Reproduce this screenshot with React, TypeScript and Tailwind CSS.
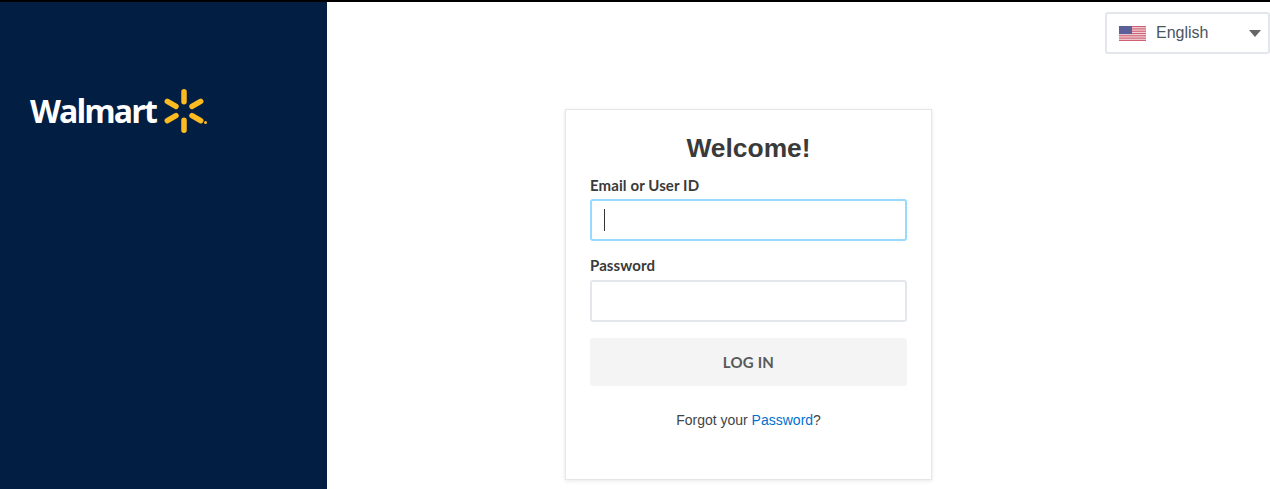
function Spark() {
  return (
    <svg viewBox="0 0 40 44" className="w-[40px] h-[44px]">
      <g fill="#fdbb21">
        <rect x="17.25" y="0" width="5.5" height="15.5" rx="2.75" />
        <rect x="17.25" y="0" width="5.5" height="15.5" rx="2.75" transform="rotate(60 20 22)" />
        <rect x="17.25" y="0" width="5.5" height="15.5" rx="2.75" transform="rotate(120 20 22)" />
        <rect x="17.25" y="0" width="5.5" height="15.5" rx="2.75" transform="rotate(180 20 22)" />
        <rect x="17.25" y="0" width="5.5" height="15.5" rx="2.75" transform="rotate(240 20 22)" />
        <rect x="17.25" y="0" width="5.5" height="15.5" rx="2.75" transform="rotate(300 20 22)" />
      </g>
    </svg>
  );
}

function UsFlag() {
  return (
    <svg viewBox="0 0 27 15" className="w-[27px] h-[15px]">
      <rect width="27" height="15" fill="#f3dfe2" />
      <g fill="#cf5f72">
        <rect y="0" width="27" height="1.2" />
        <rect y="2.3" width="27" height="1.2" />
        <rect y="4.6" width="27" height="1.2" />
        <rect y="6.9" width="27" height="1.2" />
        <rect y="9.2" width="27" height="1.2" />
        <rect y="11.5" width="27" height="1.2" />
        <rect y="13.8" width="27" height="1.2" />
      </g>
      <rect width="13" height="8.1" fill="#5c5f98" />
    </svg>
  );
}

export default function App() {
  return (
    <div className="h-[489px] overflow-hidden bg-white border-t-2 border-black font-['Liberation_Sans',sans-serif] flex">
      <aside className="w-[327px] shrink-0 bg-[#021e42] pl-[30px] pt-[87px]">
        <div className="flex items-start">
          <span className="text-white text-[32px] leading-[44px] font-bold font-['Open_Sans',sans-serif] tracking-[-1.9px] w-[134px]">Walmart</span>
          <Spark />
          <span className="w-[3px] h-[3px] rounded-full bg-[#fdbb21] mt-[32px]" />
        </div>
      </aside>

      <main className="flex-1 flex flex-col">
        <div className="flex justify-end pt-[10px]">
          <div className="w-[165px] h-[42px] border-2 border-[#e3e6ea] rounded-[3px] flex items-center pl-[12px] pr-[6px] text-[16px] text-[#4a5563]">
            <UsFlag />
            <span className="ml-[10px] flex-1">English</span>
            <span className="w-0 h-0 border-x-[6px] border-x-transparent border-t-[7px] border-t-[#666] mr-[1px]" />
          </div>
        </div>

        <div className="ml-[238px] mt-[55px] w-[367px] h-[371px] bg-white border border-[#e6e6e6] shadow-[0_1px_4px_rgba(0,0,0,0.1)] px-[24px]">
          <h1 className="text-center text-[26.4px] leading-[32px] font-bold text-[#3a3a3a] mt-[22px]">Welcome!</h1>
          <label className="block mt-[12px] text-[15px] leading-[18px] font-bold text-[#3a3a3a] font-['Lato',sans-serif] tracking-[0.1px]">Email or User ID</label>
          <div className="mt-[5px] h-[42px] border-[2.5px] border-[#97d9ff] rounded-[3px] flex items-center pl-[12px]">
            <span className="w-px h-[22px] bg-[#333]" />
          </div>
          <label className="block mt-[15px] text-[15px] leading-[18px] font-bold text-[#3a3a3a] font-['Lato',sans-serif] tracking-[0.1px]">Password</label>
          <div className="mt-[6px] h-[42px] border-2 border-[#e3e6ea] rounded-[3px]" />
          <button className="mt-[16px] w-full h-[48px] bg-[#f4f4f4] rounded-[3px] text-[15px] font-bold text-[#595959] font-['Lato',sans-serif] tracking-[0.2px]">LOG IN</button>
          <p className="mt-[25px] text-center text-[14px] leading-[18px] text-[#444]">
            Forgot your <a className="text-[#0071ce]">Password</a>?
          </p>
        </div>
      </main>
    </div>
  );
}
